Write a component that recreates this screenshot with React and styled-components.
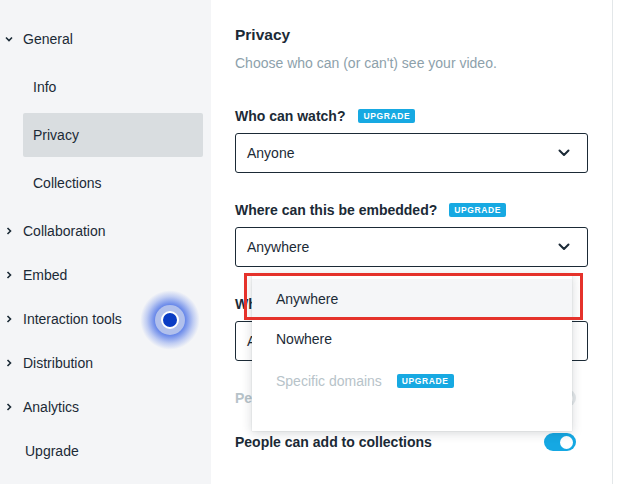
import React from "react";
import styled, { createGlobalStyle } from "styled-components";

const Global = createGlobalStyle`
  html, body { margin: 0; padding: 0; }
  body {
    width: 625px;
    height: 484px;
    overflow: hidden;
    background: #ffffff;
    font-family: "Liberation Sans", Arial, sans-serif;
    color: #1b2a36;
  }
  * { box-sizing: border-box; }
`;

const Root = styled.div`
  position: relative;
  display: flex;
  width: 625px;
  height: 484px;
  overflow: hidden;
`;

const Sidebar = styled.nav`
  width: 211px;
  flex: none;
  background: #f4f5f7;
  padding-top: 17px;
  display: flex;
  flex-direction: column;
`;

const NavItem = styled.div`
  height: 44px;
  display: flex;
  align-items: center;
  font-size: 14px;
  color: #1b2a36;
  padding-left: ${(p) => (p.$plain ? "25px" : "0")};
`;

const Chevron = styled.span`
  width: 23px;
  display: flex;
  justify-content: ${(p) => (p.$down ? "flex-start" : "center")};
  padding-left: ${(p) => (p.$down ? "5px" : "0")};
  padding-right: ${(p) => (p.$down ? "0" : "5px")};
  align-items: center;
`;

const SubList = styled.div`
  display: flex;
  flex-direction: column;
  gap: 4px;
  margin: 4px 0;
`;

const SubItem = styled.div`
  height: 44px;
  width: 180px;
  margin-left: 23px;
  padding-left: 10px;
  display: flex;
  align-items: center;
  font-size: 14px;
  border-radius: 2px;
  background: ${(p) => (p.$active ? "#d9dde0" : "transparent")};
`;

const Main = styled.main`
  width: 402px;
  flex: none;
  border-right: 1px solid #e3e7e9;
  padding: 26px 24px 0 24px;
  display: flex;
  flex-direction: column;
`;

const Heading = styled.h2`
  margin: 0;
  font-size: 15.5px;
  line-height: 18px;
  font-weight: 700;
  color: #1b2a36;
`;

const Subtitle = styled.p`
  margin: 10px 0 35px;
  font-size: 14px;
  line-height: 18px;
  color: #8da1ab;
`;

const Field = styled.div`
  margin-bottom: 28px;
  display: flex;
  flex-direction: column;
`;

const Label = styled.div`
  display: flex;
  align-items: center;
  height: 18px;
  margin-bottom: 8px;
  font-size: 14px;
  font-weight: 700;
  color: #1b2a36;
`;

const Badge = styled.span`
  display: inline-flex;
  align-items: center;
  justify-content: center;
  height: 14px;
  padding: 0 5px;
  margin-left: ${(p) => p.$gap || 12}px;
  background: #17a9e2;
  color: #ffffff;
  border-radius: 2px;
  font-size: 8.5px;
  font-weight: 700;
  letter-spacing: 0.6px;
`;

const SelectWrap = styled.div`
  position: relative;
`;

const SelectBox = styled.div`
  height: 40px;
  border: 1px solid #1b2a36;
  border-radius: 3px;
  display: flex;
  align-items: center;
  justify-content: space-between;
  padding: 0 17px 0 11px;
  font-size: 14px;
  color: #1b2a36;
`;

const Menu = styled.div`
  position: absolute;
  top: calc(100% + 7px);
  left: 17px;
  width: 320px;
  height: 157px;
  background: #ffffff;
  box-shadow: 0 2px 10px rgba(20, 35, 45, 0.18), 0 0 1px rgba(20, 35, 45, 0.2);
  padding: 5px 0 0;
  z-index: 5;
  display: flex;
  flex-direction: column;
`;

const MenuItem = styled.div`
  height: ${(p) => (p.$disabled ? 44 : 40)}px;
  display: flex;
  align-items: center;
  padding-left: 24px;
  font-size: 14px;
  color: ${(p) => (p.$disabled ? "#b7c3c9" : "#1b2a36")};
  background: ${(p) => (p.$hover ? "#f5f6f8" : "#ffffff")};
`;

const Highlight = styled.div`
  position: absolute;
  left: -8px;
  top: -1px;
  width: 339px;
  height: 47px;
  border: 3px solid #e5322b;
  pointer-events: none;
`;

const ToggleRow = styled.div`
  height: 18px;
  display: flex;
  align-items: center;
  justify-content: space-between;
  padding-right: 12px;
  margin-bottom: ${(p) => p.$mb || 0}px;
  font-size: 14px;
  font-weight: 700;
  color: ${(p) => (p.$disabled ? "#b7c3c9" : "#1b2a36")};
`;

const Toggle = styled.span`
  width: 32px;
  height: 18px;
  border-radius: 9px;
  background: ${(p) => (p.$on ? "#15a8e3" : "#e5e9eb")};
  display: flex;
  align-items: center;
  justify-content: flex-end;
  padding-right: 3px;
  &::after {
    content: "";
    width: 13px;
    height: 13px;
    border-radius: 50%;
    background: #ffffff;
  }
`;

const Cursor = styled.div`
  position: absolute;
  left: 140px;
  top: 290px;
  width: 60px;
  height: 60px;
  border-radius: 50%;
  background: radial-gradient(
    circle,
    rgba(35, 80, 225, 0.85) 0%,
    rgba(45, 90, 228, 0.7) 36%,
    rgba(70, 110, 232, 0.3) 55%,
    rgba(120, 150, 240, 0) 70%
  );
  display: flex;
  align-items: center;
  justify-content: center;
  z-index: 10;
`;

const CursorRing = styled.div`
  width: 30px;
  height: 30px;
  border-radius: 50%;
  background: #b1c0ec;
  display: flex;
  align-items: center;
  justify-content: center;
`;

const CursorDot = styled.div`
  width: 18px;
  height: 18px;
  border-radius: 50%;
  background: #0a3cc4;
  border: 2px solid #ffffff;
`;

const Spacer = styled.div`
  flex: 1;
`;

const ChevronRight = () => (
  <svg width="6" height="8" viewBox="0 0 6 8">
    <path d="M1.5 1 L4.5 4 L1.5 7" fill="none" stroke="#1b2a36" strokeWidth="1.6" />
  </svg>
);

const ChevronDownSmall = () => (
  <svg width="8" height="6" viewBox="0 0 8 6">
    <path d="M1 1.5 L4 4.5 L7 1.5" fill="none" stroke="#1b2a36" strokeWidth="1.6" />
  </svg>
);

const SelectChevron = () => (
  <svg width="12" height="8" viewBox="0 0 12 8">
    <path d="M1.5 1.5 L6 6 L10.5 1.5" fill="none" stroke="#1b2a36" strokeWidth="2" strokeLinecap="round" strokeLinejoin="round" />
  </svg>
);

const topItems = ["Collaboration", "Embed", "Interaction tools", "Distribution", "Analytics"];

export default function App() {
  return (
    <>
      <Global />
      <Root>
        <Sidebar>
          <NavItem>
            <Chevron $down>
              <ChevronDownSmall />
            </Chevron>
            General
          </NavItem>
          <SubList>
            <SubItem>Info</SubItem>
            <SubItem $active>Privacy</SubItem>
            <SubItem>Collections</SubItem>
          </SubList>
          {topItems.map((t) => (
            <NavItem key={t}>
              <Chevron>
                <ChevronRight />
              </Chevron>
              {t}
            </NavItem>
          ))}
          <NavItem $plain>Upgrade</NavItem>
        </Sidebar>

        <Main>
          <Heading>Privacy</Heading>
          <Subtitle>Choose who can (or can't) see your video.</Subtitle>

          <Field>
            <Label>
              Who can watch?
              <Badge $gap={13}>UPGRADE</Badge>
            </Label>
            <SelectWrap>
              <SelectBox>
                Anyone
                <SelectChevron />
              </SelectBox>
            </SelectWrap>
          </Field>

          <Field>
            <Label>
              Where can this be embedded?
              <Badge>UPGRADE</Badge>
            </Label>
            <SelectWrap>
              <SelectBox>
                Anywhere
                <SelectChevron />
              </SelectBox>
              <Menu>
                <MenuItem $hover>Anywhere</MenuItem>
                <MenuItem>Nowhere</MenuItem>
                <MenuItem $disabled>
                  Specific domains
                  <Badge $gap={15}>UPGRADE</Badge>
                </MenuItem>
                <Highlight />
              </Menu>
            </SelectWrap>
          </Field>

          <Field>
            <Label>Who can comment?</Label>
            <SelectWrap>
              <SelectBox>
                Anyone
                <SelectChevron />
              </SelectBox>
            </SelectWrap>
          </Field>

          <ToggleRow $disabled $mb={26}>
            People can download
            <Toggle />
          </ToggleRow>
          <ToggleRow>
            People can add to collections
            <Toggle $on />
          </ToggleRow>
          <Spacer />
        </Main>

        <Cursor>
          <CursorRing>
            <CursorDot />
          </CursorRing>
        </Cursor>
      </Root>
    </>
  );
}
